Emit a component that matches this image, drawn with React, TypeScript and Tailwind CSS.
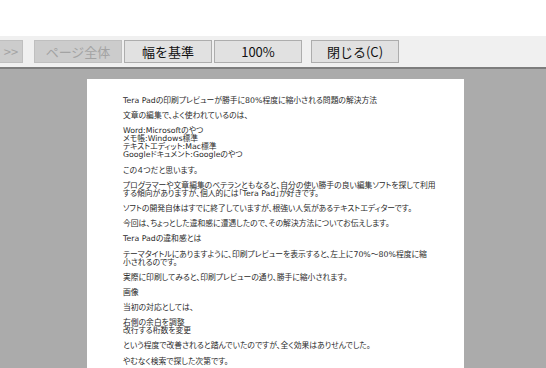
import React from 'react';

const paragraphs: string[][] = [
  ['Tera Padの印刷プレビューが勝手に80%程度に縮小される問題の解決方法'],
  ['文章の編集で、よく使われているのは、'],
  ['Word:Microsoftのやつ', 'メモ帳:Windows標準', 'テキストエディット:Mac標準', 'Googleドキュメント:Googleのやつ'],
  ['この４つだと思います。'],
  ['プログラマーや文章編集のベテランともなると、自分の使い勝手の良い編集ソフトを探して利用', 'する傾向がありますが、個人的には「Tera Pad」が好きです。'],
  ['ソフトの開発自体はすでに終了していますが、根強い人気があるテキストエディターです。'],
  ['今回は、ちょっとした違和感に遭遇したので、その解決方法についてお伝えします。'],
  ['Tera Padの違和感とは'],
  ['テーマタイトルにありますように、印刷プレビューを表示すると、左上に70%～80%程度に縮', '小されるのです。'],
  ['実際に印刷してみると、印刷プレビューの通り、勝手に縮小されます。'],
  ['画像'],
  ['当初の対応としては、'],
  ['右側の余白を調整', '改行する桁数を変更'],
  ['という程度で改善されると踏んでいたのですが、全く効果はありせんでした。'],
  ['やむなく検索で探した次第です。'],
];

const ToolButton: React.FC<{ label: string; disabled?: boolean; className?: string }> = ({ label, disabled, className }) => (
  <div
    className={
      'h-[23px] flex items-center justify-center border text-[13px] leading-none ' +
      (disabled ? 'bg-[#cccccc] border-[#bfbfbf] text-[#a3a3a3] ' : 'bg-[#e1e1e1] border-[#adadad] text-[#111] ') +
      (className ?? '')
    }
  >
    {label}
  </div>
);

export default function App() {
  return (
    <div
      className="w-[546px] h-[368px] overflow-hidden bg-white flex flex-col"
      style={{ fontFamily: '"Noto Sans CJK JP", "Noto Sans", sans-serif' }}
    >
      <div className="h-[36px] bg-white shrink-0" />
      <div className="h-[31px] bg-[#f0f0f0] flex items-start pt-[4px] shrink-0">
        <ToolButton label=">>" disabled className="w-[23px] border-l-0" />
        <ToolButton label="ページ全体" disabled className="w-[88px] ml-[11px]" />
        <ToolButton label="幅を基準" className="w-[88px] ml-[2px]" />
        <ToolButton label="100%" className="w-[88px] ml-[2px]" />
        <ToolButton label="閉じる(C)" className="w-[88px] ml-[9px]" />
      </div>
      <div className="h-[2px] bg-[#7d7d7d] shrink-0" />
      <div className="flex-1 bg-[#ababab] pl-[87px] pt-[10px] overflow-hidden">
        <div
          className="w-[377px] h-full bg-white pt-[18px] pl-[36px] text-[7.8px] leading-[8px] text-[#2a2a2a] whitespace-nowrap [font-feature-settings:'palt']"
          style={{ fontFamily: '"DejaVu Sans", "Noto Sans CJK JP", sans-serif' }}
        >
          {paragraphs.map((p, i) => (
            <div key={i} className="mb-[7.2px]">
              {p.map((line, j) => (
                <div key={j}>{line}</div>
              ))}
            </div>
          ))}
        </div>
      </div>
    </div>
  );
}
